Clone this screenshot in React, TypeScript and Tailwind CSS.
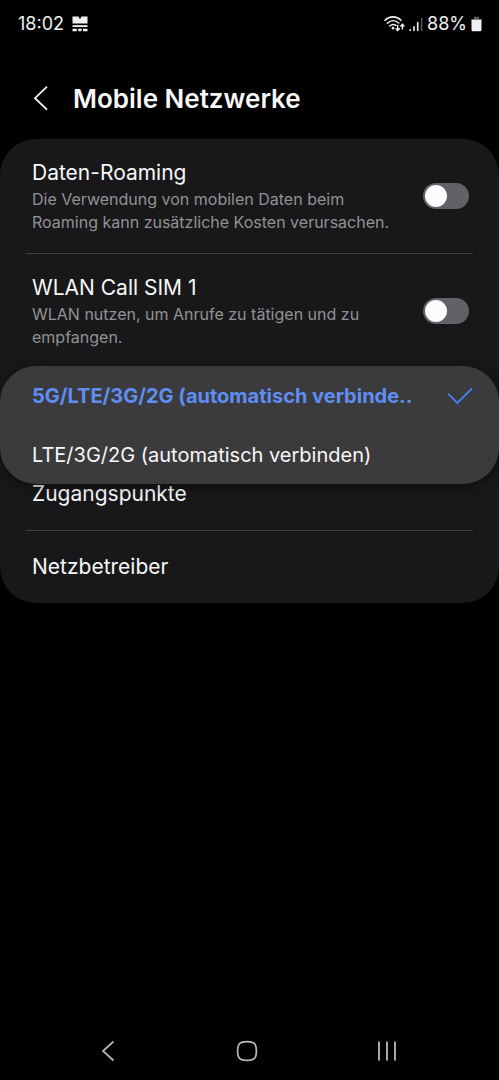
import { useState } from 'react';

const toggles = [
  {
    id: 'roaming',
    title: 'Daten-Roaming',
    description: 'Die Verwendung von mobilen Daten beim Roaming kann zusätzliche Kosten verursachen.',
  },
  {
    id: 'wlan-call',
    title: 'WLAN Call SIM 1',
    description: 'WLAN nutzen, um Anrufe zu tätigen und zu empfangen.',
  },
];

const modes = [
  { id: '5g', label: '5G/LTE/3G/2G (automatisch verbinde..' },
  { id: 'lte', label: 'LTE/3G/2G (automatisch verbinden)' },
];

function StatusBar() {
  return (
    <div className="flex h-12 items-center justify-between pr-[17px] pl-[18px] text-lg text-[#f0f0f0]">
      <div className="flex items-center gap-2">
        <span>18:02</span>
        <svg width="16" height="16" viewBox="0 0 16 16" fill="currentColor">
          <path d="M0.5 0.5H6.5L8 3.5L9.5 0.5H15.5V7.5H0.5Z" />
          <path d="M0.5 9.2H15.5V11H0.5Z" />
          <path d="M0.5 12.8H4.8V15.2H0.5ZM5.6 12.8H10.2L9 15.2H6.8ZM11 12.8H15.5V15.2H11Z" />
        </svg>
      </div>
      <div className="flex items-center gap-1">
        <svg width="21" height="18" viewBox="0 0 21 18" fill="none" stroke="currentColor" strokeWidth="1.6" strokeLinecap="round">
          <path d="M1 5.2C5.5 0.8 12.5 0.8 17 5.2" />
          <path d="M3.4 8.2C6.8 4.9 11.3 4.9 14.7 8" />
          <path d="M5.8 11C7.8 9.1 10 9.1 12 10.4" />
          <circle cx="9" cy="13.2" r="0.6" fill="currentColor" />
          <path d="M13.7 10.5V15.3M12 13.8L13.7 15.5L15.4 13.8" strokeWidth="1.4" />
          <path d="M18.4 14V9.5M16.8 11L18.4 9.3L20 11" strokeWidth="1.4" />
        </svg>
        <svg width="14" height="15" viewBox="0 0 14 15" fill="none" stroke="currentColor" strokeWidth="1.6" strokeLinecap="round">
          <path d="M1.2 12.8V13.5M5 9.8V13.5M8.7 5.5V13.5" />
          <path d="M12.6 1.5V13.5" stroke="#555" />
        </svg>
        <span>88%</span>
        <svg width="11" height="16" viewBox="0 0 11 16">
          <path d="M3 0.8H8V3H10.5V5H0.5V3H3Z" fill="#5c5c5c" />
          <path d="M0.5 3.7H10.5V14Q10.5 15.3 9.2 15.3H1.8Q0.5 15.3 0.5 14Z" fill="currentColor" />
        </svg>
      </div>
    </div>
  );
}

function Divider() {
  return <div className="mx-[26px] h-px bg-[#414143]" />;
}

function NavBar() {
  return (
    <nav className="mt-auto grid h-[58px] grid-cols-3 items-center pr-[42px] pl-[38px] text-[#b8b8b8]">
      <button type="button" aria-label="Zurück" className="flex h-full items-center justify-center">
        <svg width="22" height="22" viewBox="0 0 22 22" fill="none" stroke="currentColor" strokeWidth="1.7">
          <path d="M16.5 1.5L6 11L16.5 20.5" />
        </svg>
      </button>
      <button type="button" aria-label="Startbildschirm" className="flex h-full items-center justify-center">
        <svg width="22" height="22" viewBox="0 0 22 22" fill="none" stroke="currentColor" strokeWidth="1.7">
          <path d="M11 1.6C18.2 1.6 20.4 3.8 20.4 11S18.2 20.4 11 20.4S1.6 18.2 1.6 11S3.8 1.6 11 1.6Z" />
        </svg>
      </button>
      <button type="button" aria-label="Letzte Apps" className="flex h-full items-center justify-center">
        <svg width="22" height="22" viewBox="0 0 22 22" fill="none" stroke="currentColor" strokeWidth="1.8">
          <path d="M3 1.5V20.5M11 1.5V20.5M19 1.5V20.5" />
        </svg>
      </button>
    </nav>
  );
}

export default function App() {
  const [enabled, setEnabled] = useState<Record<string, boolean>>({});
  const [mode, setMode] = useState('5g');

  return (
    <div className="flex min-h-screen flex-col bg-black font-['Inter','Roboto',sans-serif] text-[#f7f7f7]">
      <StatusBar />

      <header className="flex h-[91px] items-center gap-5 pt-4 pb-1.5 pl-[29px]">
        <button type="button" aria-label="Navigation nach oben">
          <svg width="24" height="28" viewBox="0 0 24 28" fill="none" stroke="currentColor" strokeWidth="1.8" strokeLinecap="round">
            <path d="M17.5 2.2L6 13.2L17.5 24.2" />
          </svg>
        </button>
        <h1 className="text-[26px] leading-8 font-semibold">Mobile Netzwerke</h1>
      </header>

      <main className="rounded-[36px] bg-[#18181a] text-[21px] leading-7">
        {toggles.map((item) => (
          <div key={item.id}>
            <label htmlFor={item.id} className="flex items-center justify-between gap-6 pt-5 pr-[30px] pb-[19px] pl-8">
              <span>
                <span className="mb-px block">{item.title}</span>
                <span className="block text-base leading-[23px] text-[#929294]">{item.description}</span>
              </span>
              <input
                id={item.id}
                type="checkbox"
                role="switch"
                checked={!!enabled[item.id]}
                onChange={(e) => setEnabled({ ...enabled, [item.id]: e.target.checked })}
                className="mb-0.5 h-[26px] w-[46px] shrink-0 appearance-none rounded-full bg-[#626266] p-0.5 before:block before:size-[22px] before:rounded-full before:bg-[#fcfcff] checked:bg-[#4a7ff0] checked:before:ml-5"
              />
            </label>
            {item.id === 'roaming' && <Divider />}
          </div>
        ))}

        {/* network mode row, covered by its open menu */}
        <div className="relative h-[90px]">
          <div
            role="listbox"
            className="absolute inset-x-0 -top-0.5 z-10 rounded-[36px] bg-[#3b3b3d] shadow-[0_2px_12px_rgba(0,0,0,0.5)]"
          >
            {modes.map((m) => (
              <button
                key={m.id}
                type="button"
                role="option"
                aria-selected={mode === m.id}
                onClick={() => setMode(m.id)}
                className={`flex h-[59px] w-full items-center justify-between pr-[26px] pl-8 text-left text-xl whitespace-nowrap ${
                  mode === m.id ? 'font-bold text-[#608df2]' : ''
                }`}
              >
                {m.label}
                {mode === m.id && (
                  <svg width="26" height="18" viewBox="0 0 26 18" fill="none" stroke="#4a80f5" strokeWidth="1.8" strokeLinecap="round">
                    <path d="M1.5 7.2L10.3 16L24.5 2" />
                  </svg>
                )}
              </button>
            ))}
          </div>
        </div>

        <button type="button" className="block w-full px-8 py-[22px] text-left">
          Zugangspunkte
        </button>
        <Divider />
        <button type="button" className="block w-full px-8 py-[22px] text-left">
          Netzbetreiber
        </button>
      </main>

      <NavBar />
    </div>
  );
}
